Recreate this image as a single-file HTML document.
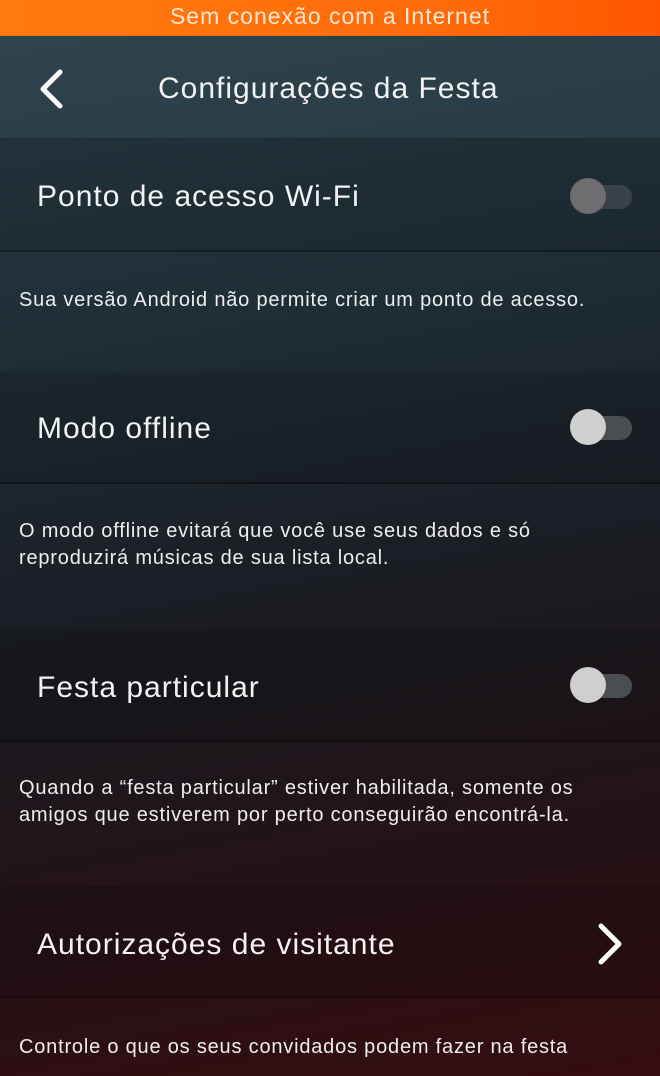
<!DOCTYPE html>
<html><head><meta charset="utf-8"><style>
*{margin:0;padding:0;box-sizing:border-box}
body{width:660px;height:1076px;overflow:hidden;font-family:"Liberation Sans",sans-serif;color:#f2f2f2;
background:linear-gradient(170deg,#2c414b 0%,#1d2a31 35%,#1a1a20 58%,#241216 80%,#360c10 100%);position:relative}
.bar{position:absolute;left:0;top:0;width:660px;height:36px;background:linear-gradient(90deg,#ff7a10,#ff6a08 70%,#ff5500);color:#fde6d2;font-size:23px;letter-spacing:1px;text-align:center;line-height:33px}
.hdr{position:absolute;left:0;top:36px;width:660px;height:104px;background:rgba(60,85,95,.25);border-bottom:2px solid rgba(0,0,0,.25)}
.hdr .t{position:absolute;left:158px;top:36px;font-size:30px;letter-spacing:1px}
.row{position:absolute;left:0;width:660px;height:112px;background:rgba(0,0,0,.12);border-bottom:2px solid rgba(0,0,0,.3)}
.row .l{position:absolute;left:37px;top:40px;font-size:30px;letter-spacing:1px}
.desc{position:absolute;left:19px;font-size:20px;letter-spacing:0.8px;line-height:27px;color:#eee}
.tg{position:absolute;left:570px;top:38px;width:62px;height:36px}
.tg .tr{position:absolute;left:16px;top:7px;width:46px;height:24px;border-radius:12px;background:#4a4d52}
.tg .k{position:absolute;left:0;top:0;width:36px;height:36px;border-radius:50%;background:#cfcfcf}
</style></head><body>
<div class="bar">Sem conexão com a Internet</div>
<div class="hdr">
<svg style="position:absolute;left:36px;top:32px" width="30" height="42" viewBox="0 0 30 42"><path d="M24 4 L7 21 L24 38" fill="none" stroke="#fff" stroke-width="5" stroke-linecap="round" stroke-linejoin="round"/></svg>
<div class="t">Configurações da Festa</div></div>
<div class="row" style="top:140px"><div class="l">Ponto de acesso Wi-Fi</div><div class="tg"><div class="tr" style="background:#3a4248"></div><div class="k" style="background:#6e6e70"></div></div></div>
<div class="desc" style="top:287px">Sua versão Android não permite criar um ponto de acesso.</div>
<div class="row" style="top:372px"><div class="l">Modo offline</div><div class="tg" style="top:37px"><div class="tr"></div><div class="k"></div></div></div>
<div class="desc" style="top:518px">O modo offline evitará que você use seus dados e só<br>reproduzirá músicas de sua lista local.</div>
<div class="row" style="top:630px"><div class="l" style="top:41px">Festa particular</div><div class="tg" style="top:37px"><div class="tr"></div><div class="k"></div></div></div>
<div class="desc" style="top:775px">Quando a “festa particular” estiver habilitada, somente os<br>amigos que estiverem por perto conseguirão encontrá-la.</div>
<div class="row" style="top:886px"><div class="l" style="top:42px">Autorizações de visitante</div>
<svg style="position:absolute;left:594px;top:36px" width="32" height="44" viewBox="0 0 32 44"><path d="M7 4 L25 22 L7 40" fill="none" stroke="#fff" stroke-width="5" stroke-linecap="round" stroke-linejoin="round"/></svg></div>
<div class="desc" style="top:1034px">Controle o que os seus convidados podem fazer na festa</div>
</body></html>
